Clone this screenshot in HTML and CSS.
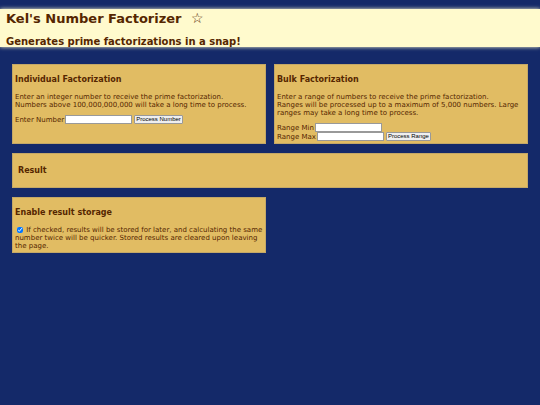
FILE: index.html
```html
<!DOCTYPE html>
<html lang="en">
<head>
    <meta charset="UTF-8">
    <meta name="viewport" content="width=device-width, initial-scale=1.0">
    <title>Kel's Number Factorizer</title>
    <link rel="stylesheet" href="styles.css">
</head>
<body>
    <header>
        <h1>Kel's Number Factorizer <span class="star">☆</span></h1>
        <h2>Generates prime factorizations in a snap!</h2>
    </header>
    <main>
        <section class="panel">
            <h3>Individual Factorization</h3>
            <p>Enter an integer number to receive the prime factorization.<br>Numbers above 100,000,000,000 will take a long time to process.</p>
            <div class="field">
                <label for="number">Enter Number</label>
                <input type="text" id="number">
                <button type="button">Process Number</button>
            </div>
        </section>
        <section class="panel">
            <h3>Bulk Factorization</h3>
            <p>Enter a range of numbers to receive the prime factorization.<br>Ranges will be processed up to a maximum of 5,000 numbers. Large ranges may take a long time to process.</p>
            <div class="field">
                <label for="range-min">Range Min</label>
                <input type="text" id="range-min">
            </div>
            <div class="field">
                <label for="range-max">Range Max</label>
                <input type="text" id="range-max">
                <button type="button">Process Range</button>
            </div>
        </section>
        <section class="panel result">
            <h3>Result</h3>
        </section>
        <section class="panel">
            <h3>Enable result storage</h3>
            <p>
                <input type="checkbox" id="storage" checked>
                <label for="storage">If checked, results will be stored for later, and calculating the same number twice will be quicker. Stored results are cleared upon leaving the page.</label>
            </p>
        </section>
    </main>
</body>
</html>
```
FILE: styles.css
```css
body {
    margin: 0;
    padding-top: 9px;
    background-color: #142969;
    color: #552600;
    font-family: Verdana, "DejaVu Sans", sans-serif;
    font-size: 7px;
    line-height: 8px;
}
header {
    padding: 1px 6px 0;
    background-color: #fffacd;
    box-shadow: 0 0 4px #fffacd;
}
h1, h2, h3, p {
    margin: 0;
}
h1 {
    margin-bottom: 9px;
    font-size: 13px;
    line-height: 17px;
}
.star {
    margin-left: 5px;
    font-size: 14px;
    line-height: 13px;
}
h2 {
    font-size: 10px;
    line-height: 11px;
}
h3 {
    margin-bottom: 8px;
    font-size: 8px;
    line-height: 10px;
}
main {
    display: grid;
    grid-template-columns: 1fr 1fr;
    gap: 9px 8px;
    padding: 17px 12px;
}
.panel {
    padding: 10px 2px 2px;
    border: 1px solid #c4a867;
    background-color: #e1bc63;
}
.result {
    grid-column: 1 / -1;
    padding: 12px 5px 3px;
}
.field {
    display: flex;
    align-items: center;
    gap: 1px;
}
p + .field {
    margin-top: 6px;
}
.field input {
    box-sizing: border-box;
    width: 67px;
    height: 9px;
    padding: 0 1px;
    border: 1px solid #999;
    background-color: #fff;
    font-size: 7px;
}
.field button {
    height: 9px;
    margin-left: 1px;
    padding: 0 1px;
    border: 1px solid #999;
    border-radius: 1px;
    background-color: #efefef;
    color: #000;
    font-family: "Liberation Sans", sans-serif;
    font-size: 6px;
    line-height: 7px;
}
input[type="checkbox"] {
    width: 6px;
    height: 6px;
    margin: 0 1px 0 2px;
    vertical-align: -1px;
}
```
